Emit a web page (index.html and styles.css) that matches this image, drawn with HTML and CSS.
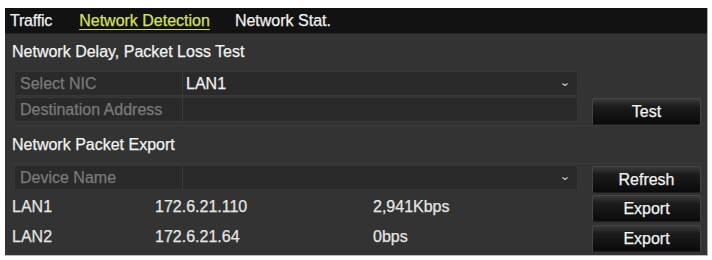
FILE: index.html
```html
<!DOCTYPE html>
<html>
<head>
<meta charset="utf-8">
<link rel="stylesheet" href="styles.css">
</head>
<body>
<div class="panel">
  <div class="tabs">
    <span class="tab">Traffic</span>
    <span class="tab active">Network Detection</span>
    <span class="tab">Network Stat.</span>
  </div>
  <div class="content">
    <div class="title t1">Network Delay, Packet Loss Test</div>
    <div class="row r-nic">
      <div class="field">
        <div class="label">Select NIC</div>
        <div class="value">LAN1</div>
        <svg class="arrow" width="6" height="3" viewBox="0 0 6 3"><path d="M0.5 0.5 L3 2.5 L5.5 0.5" fill="none" stroke="#d0d0d0" stroke-width="1.2"/></svg>
      </div>
    </div>
    <div class="row r-dest">
      <div class="field">
        <div class="label">Destination Address</div>
        <div class="value"></div>
      </div>
      <button class="btn">Test</button>
    </div>
    <div class="title t2">Network Packet Export</div>
    <div class="row r-dev">
      <div class="field">
        <div class="label">Device Name</div>
        <div class="value"></div>
        <svg class="arrow" width="6" height="3" viewBox="0 0 6 3"><path d="M0.5 0.5 L3 2.5 L5.5 0.5" fill="none" stroke="#d0d0d0" stroke-width="1.2"/></svg>
      </div>
      <button class="btn">Refresh</button>
    </div>
    <div class="row r-lan">
      <div class="cells">
        <span class="c1">LAN1</span>
        <span class="c2">172.6.21.110</span>
        <span class="c3">2,941Kbps</span>
      </div>
      <button class="btn">Export</button>
    </div>
    <div class="row r-lan">
      <div class="cells">
        <span class="c1">LAN2</span>
        <span class="c2">172.6.21.64</span>
        <span class="c3">0bps</span>
      </div>
      <button class="btn">Export</button>
    </div>
  </div>
</div>
</body>
</html>
```
FILE: styles.css
```css
html, body {
  margin: 0;
  padding: 0;
  background: #ffffff;
}
body {
  font-family: "Liberation Sans", Arial, sans-serif;
  font-size: 16px;
  color: #e6e6e6;
  -webkit-text-stroke: 0.25px currentColor;
}
.panel {
  margin: 8px 0 0 5px;
  width: 703px;
  height: 248px;
  background: #333333;
  border-right: 1px solid #a8a8a8;
  border-bottom: 1px solid #bdbdbd;
  box-sizing: border-box;
  display: flex;
  flex-direction: column;
}
.tabs {
  height: 26px;
  background: #121212;
  border-bottom: 1px solid #242424;
  display: flex;
  align-items: center;
  padding-left: 5px;
  gap: 27px;
  box-sizing: border-box;
}
.tab {
  color: #f0f0f0;
  line-height: 18px;
}
.tab:first-child {
  letter-spacing: -0.2px;
}
.tab.active {
  color: #d6e05a;
  text-decoration: underline;
  text-underline-offset: 3px;
  text-decoration-thickness: 1px;
  margin-right: -2px;
}
.content {
  display: flex;
  flex-direction: column;
  padding-left: 7px;
}
.title {
  color: #f2f2f2;
  display: flex;
  align-items: center;
}
.t1 {
  height: 32px;
  padding-top: 4px;
  box-sizing: border-box;
  margin-bottom: 5px;
}
.t2 {
  height: 39px;
  border-top: 1px solid #3a3a3a;
  border-bottom: 1px solid #3a3a3a;
  box-sizing: border-box;
  margin-top: 1px;
  margin-bottom: 1px;
}
.row {
  display: flex;
  align-items: center;
}
.r-nic {
  height: 25px;
  margin-bottom: 1px;
}
.r-dest {
  height: 27px;
  align-items: flex-start;
}
.r-dev {
  height: 27px;
  align-items: flex-start;
}
.r-lan {
  height: 30px;
  align-items: flex-end;
}
.field {
  margin-left: 2px;
  width: 564px;
  height: 25px;
  box-sizing: border-box;
  background: #2a2a2a;
  border: 1px solid #383838;
  border-radius: 2px;
  display: flex;
  align-items: stretch;
  position: relative;
}
.label {
  width: 168px;
  padding-left: 5px;
  box-sizing: border-box;
  color: #7a7a7a;
  border-right: 1px solid #3a3a3a;
  display: flex;
  align-items: center;
}
.value {
  flex: 1;
  padding-left: 3px;
  display: flex;
  align-items: center;
  color: #f0f0f0;
}
.arrow {
  position: absolute;
  right: 9px;
  top: 11px;
}
.btn {
  margin-left: auto;
  margin-right: 6px;
  width: 109px;
  height: 27px;
  font-family: "Liberation Sans", Arial, sans-serif;
  font-size: 16px;
  color: #f2f2f2;
  -webkit-text-stroke: 0.25px #f2f2f2;
  background: linear-gradient(#3a3a3a 0%, #1c1c1c 30%, #0a0a0a 100%);
  border: 1px solid #454545;
  border-bottom-color: #1e1e1e;
  border-radius: 2px;
  padding: 0;
}
.r-dest .btn, .r-dev .btn {
  margin-top: 1px;
}
.cells {
  display: flex;
  align-self: center;
}
.c1 { width: 143px; }
.c2 { width: 218px; }
.c3 { width: 120px; }
```
